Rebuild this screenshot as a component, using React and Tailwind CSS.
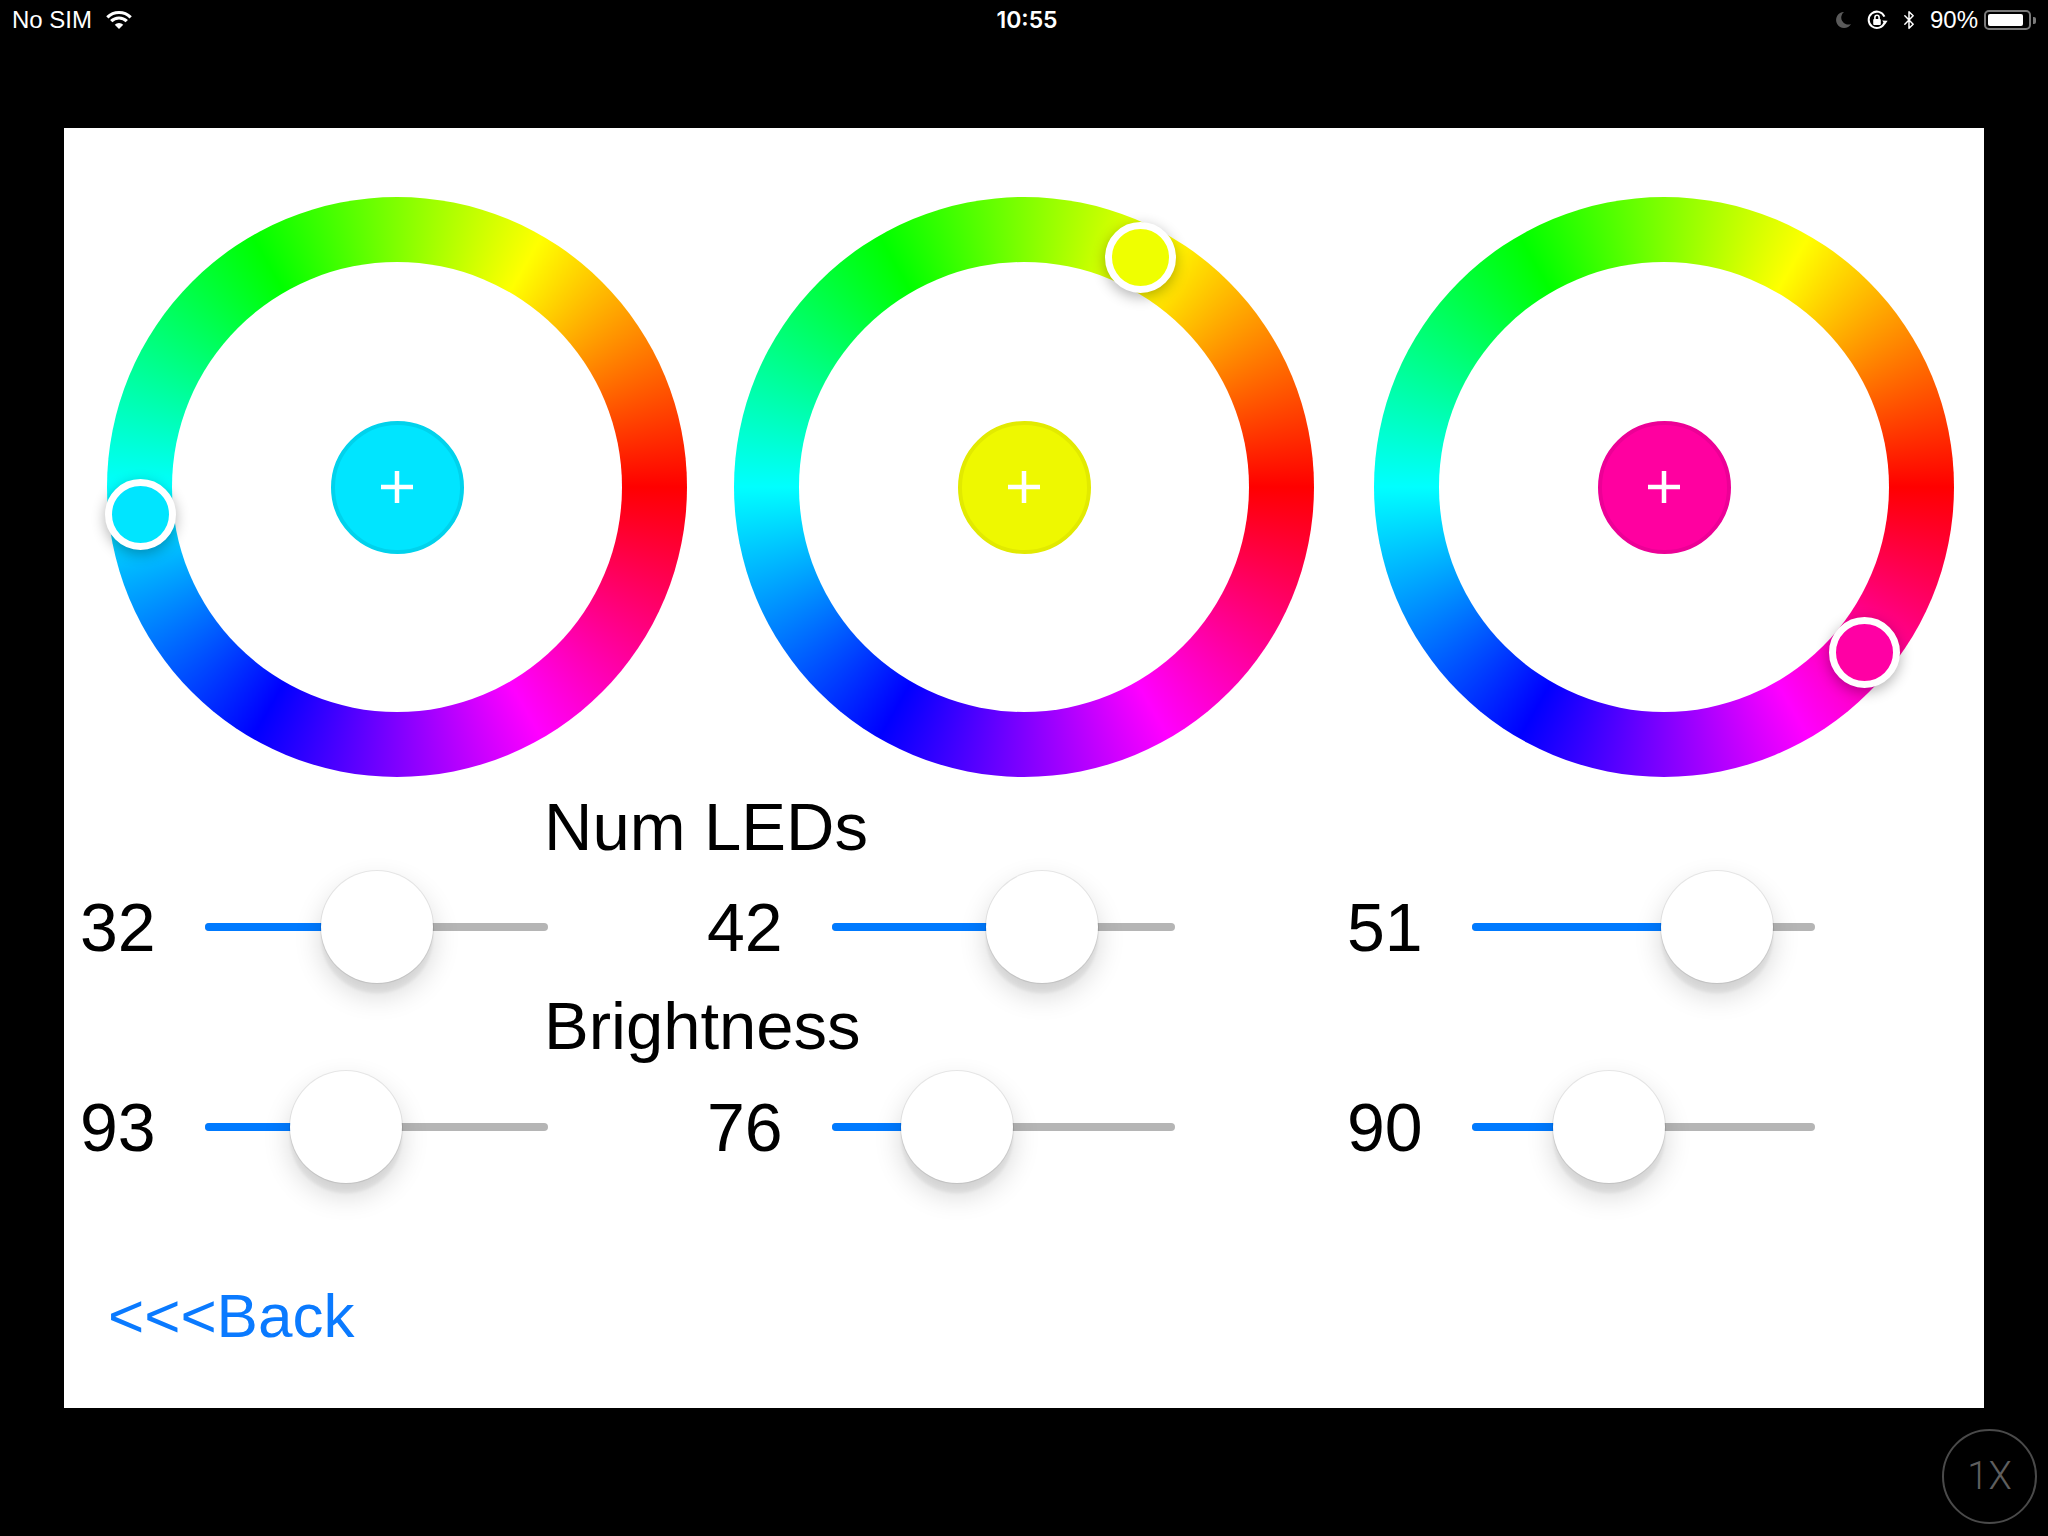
import { Bluetooth } from "lucide-react";

const wheels = [
  {
    swatch: "bg-[#00e5ff] border-[#00d2ec]",
    knob: "bg-[#00e5ff] left-[-2px] top-[282px]",
    num: { value: 32, pos: 172 },
    bright: { value: 93, pos: 141 },
  },
  {
    swatch: "bg-[#eef800] border-[#e2ea00]",
    knob: "bg-[#efff00] left-[371px] top-[25px]",
    num: { value: 42, pos: 210 },
    bright: { value: 76, pos: 125 },
  },
  {
    swatch: "bg-[#ff00a0] border-[#ec0096]",
    knob: "bg-[#ff00a4] left-[455px] top-[420px]",
    num: { value: 51, pos: 245 },
    bright: { value: 90, pos: 137 },
  },
];

function WifiIcon() {
  return (
    <svg width="28" height="20" viewBox="0 0 28 20">
      <path d="M14 19 L9.76 14.76 A6 6 0 0 1 18.24 14.76 Z" fill="white" />
      <path d="M6.22 11.22 A11 11 0 0 1 21.78 11.22" stroke="white" strokeWidth="3.2" fill="none" />
      <path d="M2.33 7.33 A16.5 16.5 0 0 1 25.67 7.33" stroke="white" strokeWidth="3.2" fill="none" />
    </svg>
  );
}

function MoonIcon() {
  return (
    <svg width="20" height="20" viewBox="0 0 20 20">
      <path d="M11 2 A8 8 0 1 0 18 14 A7 7 0 0 1 11 2 Z" fill="#5a5a5a" />
    </svg>
  );
}

function LockRotationIcon() {
  return (
    <svg width="24" height="24" viewBox="0 0 24 24">
      <path d="M19.6 14.6 A8.2 8.2 0 1 1 19.4 8.6" stroke="white" strokeWidth="2" fill="none" />
      <path d="M17.2 12.6 L20 16.6 L22.6 12.8 Z" fill="white" />
      <rect x="8.2" y="11" width="7.6" height="6" rx="1" fill="white" />
      <path d="M9.9 11 V9.4 a2.1 2.1 0 0 1 4.2 0 V11" stroke="white" strokeWidth="1.6" fill="none" />
    </svg>
  );
}

function StatusBar() {
  return (
    <div className="grid grid-cols-[1fr_auto_1fr] items-center h-[40px] px-[12px] text-white text-[24px]">
      <div className="flex items-center gap-[13px]">
        <span>No SIM</span>
        <WifiIcon />
      </div>
      <div className="pl-[6px] font-['Inter',sans-serif] font-semibold text-[23px]">10:55</div>
      <div className="flex items-center justify-end">
        <MoonIcon />
        <div className="ml-[12px]">
          <LockRotationIcon />
        </div>
        <Bluetooth className="ml-[10px] w-[20px] h-[24px] text-white" strokeWidth={1.8} />
        <span className="ml-[11px]">90%</span>
        <div className="ml-[6px] w-[47px] h-[20px] rounded-[5px] border-[2px] border-[#7a7a7a] p-[2px]">
          <div className="w-[90%] h-full rounded-[2px] bg-white" />
        </div>
        <div className="ml-[2px] w-[3px] h-[7px] rounded-r-[2px] bg-[#7a7a7a]" />
      </div>
    </div>
  );
}

function Wheel({ w }) {
  return (
    <div className="relative ml-[27px] w-[580px] h-[580px] rounded-full bg-[conic-gradient(from_90deg,red,magenta,blue,cyan,lime,yellow,red)] flex items-center justify-center">
      <div className="w-[450px] h-[450px] rounded-full bg-white flex items-center justify-center">
        <div className={`w-[133px] h-[133px] rounded-full border-[4px] flex items-center justify-center ${w.swatch}`}>
          <svg width="32" height="32" viewBox="0 0 32 32">
            <path d="M16 0 V32 M0 16 H32" stroke="white" strokeWidth="4.5" />
          </svg>
        </div>
      </div>
      {/* knob */}
      <div
        className={`absolute w-[71px] h-[71px] rounded-full border-[7px] border-white shadow-[0_4px_14px_rgba(0,0,0,0.3)] ${w.knob}`}
      />
    </div>
  );
}

function Slider({ value, pos }) {
  return (
    <div className="flex items-center h-[112px]">
      <div className="w-[125px] text-[68px] leading-none text-black">{value}</div>
      <div className="relative w-[343px] h-[112px] flex items-center">
        <div className="w-full h-[8px] rounded-full bg-[#b5b5b5]" />
        <div className="absolute left-0 h-[8px] rounded-l-full bg-[#007aff]" style={{ width: pos }} />
        <div
          className="absolute top-0 w-[112px] h-[112px] rounded-full bg-white shadow-[0_12px_28px_rgba(0,0,0,0.16),0_10px_3px_rgba(0,0,0,0.06),0_0_0_1px_rgba(0,0,0,0.08)]"
          style={{ left: pos - 56 }}
        />
      </div>
    </div>
  );
}

export default function App() {
  return (
    <div className="w-[2048px] h-[1536px] bg-black overflow-hidden font-['Liberation_Sans',sans-serif]">
      <StatusBar />

      <div className="mt-[88px] ml-[64px] w-[1920px] h-[1280px] bg-white flex flex-col">
        {/* Color wheels */}
        <div className="grid grid-cols-[627px_640px_640px] pl-[16px] pt-[69px]">
          {wheels.map((w, i) => (
            <Wheel key={i} w={w} />
          ))}
        </div>

        {/* Num LEDs */}
        <div className="mt-[16px] pl-[480px] h-[67px] text-[67px] leading-[67px] text-black">Num LEDs</div>
        <div className="mt-[11px] grid grid-cols-[627px_640px_640px] pl-[16px]">
          {wheels.map((w, i) => (
            <Slider key={i} value={w.num.value} pos={w.num.pos} />
          ))}
        </div>

        {/* Brightness */}
        <div className="mt-[9px] pl-[480px] h-[67px] text-[67px] leading-[67px] text-black">Brightness</div>
        <div className="mt-[12px] grid grid-cols-[627px_640px_640px] pl-[16px]">
          {wheels.map((w, i) => (
            <Slider key={i} value={w.bright.value} pos={w.bright.pos} />
          ))}
        </div>

        <div className="mt-[102px] pl-[44px] text-[62px] leading-[62px] text-[#0a7aff]">&lt;&lt;&lt;Back</div>
      </div>

      <div className="flex justify-end mt-[21px] pr-[11px]">
        <div className="w-[95px] h-[95px] rounded-full border-[2px] border-[#4a4a4a] flex items-center justify-center text-[38px] text-[#5e5e5e] font-['Roboto',sans-serif] font-light">
          1X
        </div>
      </div>
    </div>
  );
}
